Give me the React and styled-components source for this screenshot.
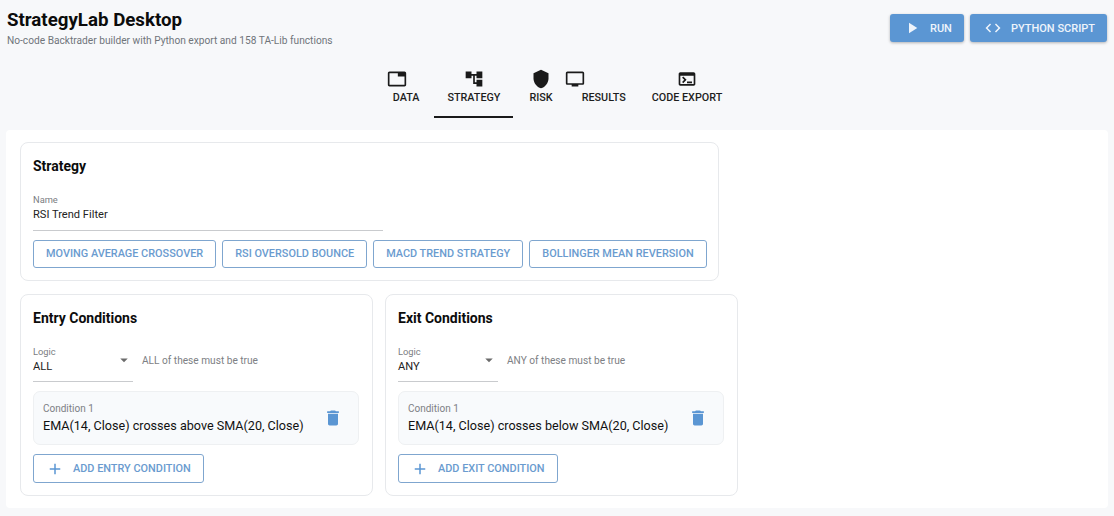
import React from 'react'
import styled, { createGlobalStyle } from 'styled-components'

const blue = '#5b96d3'

const GlobalStyle = createGlobalStyle`
  html, body { margin: 0; padding: 0; background: #f7f8fa; }
  body { font-family: Roboto, "Liberation Sans", sans-serif; color: #111; }
`

const Page = styled.div`
  width: 1114px;
  height: 516px;
  overflow: hidden;
  padding: 0 6px;
  box-sizing: border-box;
  display: flex;
  flex-direction: column;
`
const Header = styled.header`
  display: flex;
  justify-content: space-between;
  align-items: flex-start;
  height: 60px;
  padding: 9px 1px 0;
  box-sizing: border-box;
`
const Title = styled.h1`
  margin: 0;
  font-size: 18.7px;
  line-height: 22px;
  font-weight: 700;
  color: #0c0c0c;
`
const Subtitle = styled.p`
  margin: 3px 0 0;
  font-size: 10.18px;
  line-height: 13px;
  color: #70757a;
`
const Actions = styled.div`
  display: flex;
  gap: 6px;
  padding-top: 5px;
`
const PrimaryButton = styled.button`
  display: flex;
  align-items: center;
  height: 28px;
  padding: 0 12px 0 ${p => p.$pad || 14}px;
  gap: ${p => p.$gap || 12}px;
  border: 0;
  border-radius: 3px;
  background: ${blue};
  color: #eef4fb;
  font: 500 11px Roboto, sans-serif;
  box-shadow: 0 1px 3px rgba(0, 0, 0, 0.28);
`
const Tabs = styled.nav`
  display: flex;
  justify-content: center;
  height: 58px;
  padding-left: 2px;
`
const Tab = styled.div`
  display: flex;
  flex-direction: column;
  align-items: center;
  box-sizing: border-box;
  padding: 9px ${p => p.$right}px 0 ${p => p.$left}px;
  font-size: 10.8px;
  font-weight: 500;
  line-height: 13px;
  color: #1d1d1d;
  border-bottom: 2px solid ${p => (p.$active ? '#1a1a1a' : 'transparent')};
`
const TabIcon = styled.svg`
  width: 20px;
  height: 20px;
  fill: #1a1a1a;
  margin-left: ${p => p.$nudge || 0}px;
  margin-bottom: 2px;
`
const Panel = styled.main`
  background: #fff;
  border-radius: 4px;
  height: 378px;
  margin-top: 12px;
  padding: 12px 14px;
  box-sizing: border-box;
  display: flex;
  flex-direction: column;
  gap: 13px;
`
const Card = styled.section`
  box-sizing: border-box;
  width: ${p => p.$width}px;
  height: ${p => p.$height}px;
  border: 1px solid #e7e9ec;
  border-radius: 8px;
  padding: 13px 13px 12px 12px;
  background: #fff;
`
const CardTitle = styled.h2`
  margin: 0;
  font-size: 14px;
  line-height: 20px;
  font-weight: 700;
  color: #0c0c0c;
`
const NameField = styled.div`
  width: 350px;
  margin-top: 18px;
  height: 37px;
  box-sizing: border-box;
  border-bottom: 1px solid #c9cbce;
`
const FieldLabel = styled.div`
  font-size: 9.3px;
  line-height: 11px;
  color: #7a7d81;
`
const FieldValue = styled.div`
  font-size: 11.1px;
  line-height: 16px;
  margin-top: 2px;
  color: #222;
`
const PresetRow = styled.div`
  display: flex;
  gap: 6px;
  margin-top: 9px;
`
const OutlineButton = styled.button`
  display: flex;
  align-items: center;
  box-sizing: border-box;
  height: ${p => p.$height || 28}px;
  padding: 0 12px ${p => p.$lift || 0}px;
  gap: ${p => p.$gap || 0}px;
  background: #fff;
  border: 1px solid #7fa6cf;
  border-radius: 3px;
  color: #6a9bcf;
  font: 500 10.9px Roboto, sans-serif;
  white-space: nowrap;
`
const ConditionColumns = styled.div`
  display: flex;
  gap: 12px;
`
const LogicRow = styled.div`
  display: flex;
  align-items: center;
  gap: 9px;
  margin-top: 18px;
`
const LogicSelect = styled.div`
  position: relative;
  width: 100px;
  height: 36px;
  box-sizing: border-box;
  border-bottom: 1px solid #c9cbce;
`
const Caret = styled.svg`
  position: absolute;
  right: 0;
  top: 5px;
  width: 18px;
  height: 18px;
  fill: #6b6b6b;
`
const Hint = styled.span`
  font-size: 10.15px;
  color: #7d8084;
  margin-bottom: 8px;
`
const ConditionBox = styled.div`
  display: flex;
  align-items: center;
  justify-content: space-between;
  box-sizing: border-box;
  height: 54px;
  margin-top: 9px;
  padding: 0 15px 0 9px;
  background: #f8fafc;
  border: 1px solid #eef0f2;
  border-radius: 7px;
`
const ConditionLabel = styled.div`
  font-size: 10px;
  line-height: 13px;
  color: #7d8084;
`
const ConditionText = styled.div`
  font-size: 12.6px;
  line-height: 17px;
  margin-top: 2px;
  color: #111;
`
const TrashIcon = styled.svg`
  width: 20px;
  height: 20px;
  fill: ${blue};
`
const AddRow = styled.div`
  margin-top: 9px;
`
const ButtonIcon = styled.svg`
  width: 18px;
  height: 18px;
  fill: ${p => p.$color || 'currentColor'};
`

const icons = {
  play: 'M8 5v14l11-7z',
  code: 'M9.4 16.6 4.8 12l4.6-4.6L8 6l-6 6 6 6 1.4-1.4zm5.2 0 4.6-4.6-4.6-4.6L16 6l6 6-6 6-1.4-1.4z',
  tab: 'M21 3H3c-1.1 0-2 .9-2 2v14c0 1.1.9 2 2 2h18c1.1 0 2-.9 2-2V5c0-1.1-.9-2-2-2zm0 16H3V5h10v4h8v10z',
  tree: 'M22 11V3h-7v3H9V3H2v8h7V8h2v10h4v3h7v-8h-7v3h-2V8h2v3z',
  shield: 'M12 1 3 5v6c0 5.55 3.84 10.74 9 12 5.16-1.26 9-6.45 9-12V5l-9-4z',
  monitor: 'M21 3H3c-1.1 0-2 .9-2 2v12c0 1.1.9 2 2 2h5v2h8v-2h5c1.1 0 1.99-.9 1.99-2L23 5c0-1.1-.9-2-2-2zm0 14H3V5h18v12z',
  terminal: 'M20 4H4c-1.1 0-2 .9-2 2v12c0 1.1.9 2 2 2h16c1.1 0 2-.9 2-2V6c0-1.1-.9-2-2-2zm0 14H4V8h16v10zm-2-1h-6v-2h6v2zM7.5 17l-1.41-1.41L8.67 13l-2.59-2.59L7.5 9l4 4-4 4z',
  trash: 'M6 19c0 1.1.9 2 2 2h8c1.1 0 2-.9 2-2V7H6v12zM19 4h-3.5l-1-1h-5l-1 1H5v2h14V4z',
  plus: 'M19 13h-6v6h-2v-6H5v-2h6V5h2v6h6v2z',
  caret: 'M7 10l5 5 5-5z',
}

const tabs = [
  { label: 'DATA', icon: 'tab', nudge: -19, left: 12, right: 15 },
  { label: 'STRATEGY', icon: 'tree', active: true, left: 13, right: 13 },
  { label: 'RISK', icon: 'shield', left: 16, right: 15 },
  { label: 'RESULTS', icon: 'monitor', nudge: -57, left: 14, right: 13 },
  { label: 'CODE EXPORT', icon: 'terminal', left: 13, right: 13 },
]

const presets = ['MOVING AVERAGE CROSSOVER', 'RSI OVERSOLD BOUNCE', 'MACD TREND STRATEGY', 'BOLLINGER MEAN REVERSION']

function ConditionCard({ title, logic, hint, condition, addLabel }) {
  return (
    <Card $width={353} $height={202}>
      <CardTitle>{title}</CardTitle>
      <LogicRow>
        <LogicSelect>
          <FieldLabel>Logic</FieldLabel>
          <FieldValue>{logic}</FieldValue>
          <Caret viewBox="0 0 24 24"><path d={icons.caret} /></Caret>
        </LogicSelect>
        <Hint>{hint}</Hint>
      </LogicRow>
      <ConditionBox>
        <div>
          <ConditionLabel>Condition 1</ConditionLabel>
          <ConditionText>{condition}</ConditionText>
        </div>
        <TrashIcon viewBox="0 0 24 24"><path d={icons.trash} /></TrashIcon>
      </ConditionBox>
      <AddRow>
        <OutlineButton $gap={9} $height={29}>
          <ButtonIcon viewBox="0 0 24 24" $color={blue}><path d={icons.plus} /></ButtonIcon>
          {addLabel}
        </OutlineButton>
      </AddRow>
    </Card>
  )
}

export default function App() {
  return (
    <Page>
      <GlobalStyle />
      <Header>
        <div>
          <Title>StrategyLab Desktop</Title>
          <Subtitle>No-code Backtrader builder with Python export and 158 TA-Lib functions</Subtitle>
        </div>
        <Actions>
          <PrimaryButton $pad={13} $gap={9}>
            <ButtonIcon viewBox="0 0 24 24"><path d={icons.play} /></ButtonIcon>
            RUN
          </PrimaryButton>
          <PrimaryButton $gap={9}>
            <ButtonIcon viewBox="0 0 24 24"><path d={icons.code} /></ButtonIcon>
            PYTHON SCRIPT
          </PrimaryButton>
        </Actions>
      </Header>
      <Tabs>
        {tabs.map(t => (
          <Tab key={t.label} $active={t.active} $left={t.left} $right={t.right}>
            <TabIcon viewBox="0 0 24 24" $nudge={t.nudge}><path d={icons[t.icon]} /></TabIcon>
            {t.label}
          </Tab>
        ))}
      </Tabs>
      <Panel>
        <Card $width={699} $height={139}>
          <CardTitle>Strategy</CardTitle>
          <NameField>
            <FieldLabel>Name</FieldLabel>
            <FieldValue>RSI Trend Filter</FieldValue>
          </NameField>
          <PresetRow>
            {presets.map(p => <OutlineButton key={p} $lift={2}>{p}</OutlineButton>)}
          </PresetRow>
        </Card>
        <ConditionColumns>
          <ConditionCard
            title="Entry Conditions"
            logic="ALL"
            hint="ALL of these must be true"
            condition="EMA(14, Close) crosses above SMA(20, Close)"
            addLabel="ADD ENTRY CONDITION"
          />
          <ConditionCard
            title="Exit Conditions"
            logic="ANY"
            hint="ANY of these must be true"
            condition="EMA(14, Close) crosses below SMA(20, Close)"
            addLabel="ADD EXIT CONDITION"
          />
        </ConditionColumns>
      </Panel>
    </Page>
  )
}
